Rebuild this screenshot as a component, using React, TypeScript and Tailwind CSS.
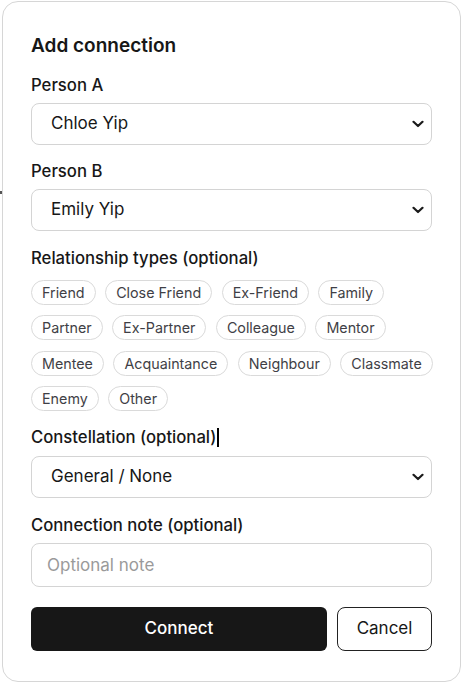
const chips = [
  ["Friend", "Close Friend", "Ex-Friend", "Family"],
  ["Partner", "Ex-Partner", "Colleague", "Mentor"],
  ["Mentee", "Acquaintance", "Neighbour", "Classmate"],
  ["Enemy", "Other"],
];

function Chevron() {
  return (
    <svg
      className="pointer-events-none absolute right-[8px] top-1/2 -translate-y-1/2"
      width="12"
      height="8"
      viewBox="0 0 12 8"
      fill="none"
    >
      <path d="M1.5 1.8L6 6L10.5 1.8" stroke="#1a1a1a" strokeWidth="2.2" strokeLinecap="round" strokeLinejoin="round" />
    </svg>
  );
}

function Select({ value }: { value: string }) {
  return (
    <div className="relative">
      <select
        defaultValue={value}
        className="w-full h-[42px] appearance-none rounded-[8px] border border-[#d4d4d4] bg-white pl-[19px] pr-8 text-[17px] text-[#171717] outline-none"
      >
        <option>{value}</option>
      </select>
      <Chevron />
    </div>
  );
}

export default function App() {
  return (
    <div className="relative min-h-[684px] bg-white font-['Inter',sans-serif]">
      <span className="absolute left-0 top-[190px] h-[3px] w-[2px] bg-[#555]" />
      <div className="ml-[2px] mt-[1px] w-[459px] rounded-[16px] border border-[#d6d6d6] bg-white px-[28px] pt-[30px] pb-[30px]">
        <h2 className="text-[19px] leading-[28px] font-semibold text-[#171717]">Add connection</h2>

        <label className="mt-[13px] mb-[6px] block text-[16.7px] leading-[24px] font-medium text-[#171717]">Person A</label>
        <Select value="Chloe Yip" />

        <label className="mt-[14px] mb-[6px] block text-[16.7px] leading-[24px] font-medium text-[#171717]">Person B</label>
        <Select value="Emily Yip" />

        <label className="mt-[15px] mb-[10px] block text-[16.7px] leading-[24px] font-medium text-[#171717]">
          Relationship types (optional)
        </label>
        <div className="flex flex-col gap-[10.4px]">
          {chips.map((row, i) => (
            <div key={i} className="flex gap-[9.5px]">
              {row.map((c) => (
                <button
                  key={c}
                  type="button"
                  className="h-[25px] rounded-full border border-[#dadada] bg-white px-[10px] text-[14.3px] leading-[23px] text-[#3f3f46]"
                >
                  {c}
                </button>
              ))}
            </div>
          ))}
        </div>

        <label className="mt-[14px] mb-[7px] flex items-center text-[16.7px] leading-[24px] font-medium text-[#171717]">
          Constellation (optional)
          <span className="ml-[1px] inline-block h-[19px] w-[2px] bg-black" />
        </label>
        <Select value="General / None" />

        <label className="mt-[15px] mb-[6px] block text-[16.7px] leading-[24px] font-medium text-[#171717]">
          Connection note (optional)
        </label>
        <input
          placeholder="Optional note"
          className="h-[44px] w-full rounded-[8px] border border-[#d4d4d4] bg-white px-[15px] text-[17px] text-[#171717] outline-none placeholder:text-[#9a9a9a]"
        />

        <div className="mt-[20px] flex gap-[10px]">
          <button
            type="button"
            className="h-[44px] flex-1 rounded-[6px] bg-[#171717] text-[17px] font-medium text-white"
          >
            Connect
          </button>
          <button
            type="button"
            className="h-[44px] w-[95px] rounded-[8px] border border-[#222] bg-white text-[17px] text-[#171717]"
          >
            Cancel
          </button>
        </div>
      </div>
    </div>
  );
}
